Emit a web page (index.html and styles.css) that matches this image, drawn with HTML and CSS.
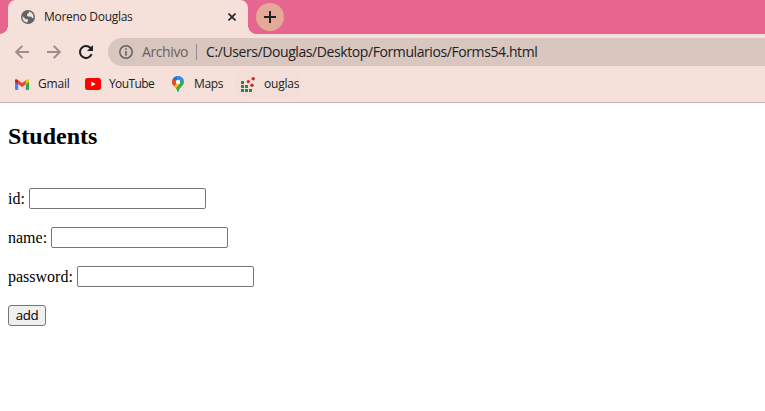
FILE: index.html
```html
<!DOCTYPE html>
<html lang="es">
<head>
<meta charset="utf-8">
<title>Moreno Douglas</title>
<link rel="stylesheet" href="styles.css">
</head>
<body>
<div class="tabstrip">
  <div class="tab">
    <svg class="globe" viewBox="0 0 14 14"><circle cx="7" cy="7" r="7" fill="#5f6368"/><path d="M7.800 1.400 7.900 3 6 4.200v1.500l1.900 1.100 2.100-.2 1.200 1.500 1.200.1C13 5.300 11.500 2.100 7.800 1.400ZM1.500 6.200l3.300 3 2.200.1v1.500l-1 1.700C3.200 12.100 1 9.500 1.500 6.200Z" fill="#f5e1da"/></svg>
    <span class="tab-title">Moreno Douglas</span>
    <svg class="close" viewBox="0 0 8 8"><path d="M.5.5 7.500 7.500M7.500.5.5 7.500" stroke="#202124" stroke-width="1.600"/></svg>
  </div>
  <div class="new-tab"><svg viewBox="0 0 12 12" width="12" height="12"><path d="M6 0v12M0 6h12" stroke="#202124" stroke-width="2"/></svg></div>
</div>
<div class="toolbar">
  <svg class="nav" viewBox="0 0 14 14"><path d="M14 7H1.500M7.300.9 1.200 7l6.100 6.100" fill="none" stroke="#9b8e8c" stroke-width="2"/></svg>
  <svg class="nav" viewBox="0 0 14 14"><path d="M0 7h12.500M6.700.9 12.800 7l-6.100 6.100" fill="none" stroke="#9b8e8c" stroke-width="2"/></svg>
  <svg class="nav reload" viewBox="0 0 14 14"><path d="M12.600 9.200A6 6 0 1 1 11.300 2.800l1 1" fill="none" stroke="#202124" stroke-width="2"/><path d="M14 0v6H8Z" fill="#202124"/></svg>
  <div class="omnibox">
    <svg class="info" viewBox="0 0 14 14"><circle cx="7" cy="7" r="6.200" fill="none" stroke="#5f6368" stroke-width="1.500"/><path d="M7 3.200v1.600M7 6v4.700" stroke="#5f6368" stroke-width="1.600"/></svg>
    <span class="scheme">Archivo</span><span class="divider"></span><span class="url">C:/Users/Douglas/Desktop/Formularios/Forms54.html</span>
  </div>
</div>
<div class="bookmarks">
  <div class="bookmark gmail">
    <svg viewBox="0 0 14 11" width="14" height="11"><path d="M0 2h3.200v9H1a1 1 0 0 1-1-1Z" fill="#4285f4"/><path d="M10.800 2H14v8a1 1 0 0 1-1 1h-2.200Z" fill="#34a853"/><path d="M3.200 1.200 7 4.100l3.800-2.900v4L7 8 3.200 5.200Z" fill="#ea4335"/><path d="M0 1.600C0 .1 1.700-.3 3.200 1.200v4L0 2.900Z" fill="#c5221f"/><path d="M14 1.600c0-1.500-1.700-1.900-3.200-.4v4L14 2.900Z" fill="#fbbc04"/></svg>
    <span>Gmail</span>
  </div>
  <div class="bookmark youtube">
    <svg viewBox="0 0 16 12" width="16" height="12"><rect width="16" height="12" rx="2.500" fill="#f00"/><path d="m6.300 3.500 4.400 2.500-4.400 2.500Z" fill="#fff"/></svg>
    <span>YouTube</span>
  </div>
  <div class="bookmark maps">
    <svg viewBox="0 0 12 16" width="12" height="16"><clipPath id="pin"><path d="M6 0a6 6 0 0 0-6 6c0 3.600 4.400 5 5.300 9.200q.7 1.400 1.400 0C7.600 11 12 9.600 12 6a6 6 0 0 0-6-6Z"/></clipPath><g clip-path="url(#pin)"><path d="M0 0h12v16H0Z" fill="#34a853"/><path d="m0 11 6-5 1.500 2L3 13.500Z" fill="#fbbc04"/><path d="M0 2.500 6 6 0 12Z" fill="#ea4335"/><path d="M0 0h5l1 6-5.200-3.500Z" fill="#1a73e8"/><path d="M4.500 0H12v4L6 6Z" fill="#4285f4"/></g><circle cx="6" cy="6" r="2.200" fill="#fff"/></svg>
    <span>Maps</span>
  </div>
  <div class="bookmark ouglas">
    <svg viewBox="0 0 14 15" width="14" height="15"><path d="M0 4h3v3H0ZM0 8h3v3H0ZM4 8h3v3H4ZM0 12h3v3H0ZM4 12h3v3H4ZM8 12h3v3H8Z" fill="#21864f"/><g fill="#c72d29"><circle cx="12.200" cy="1.800" r="1.700"/><circle cx="7.300" cy="4.600" r="1.700"/><circle cx="11" cy="8.200" r="1.700"/></g></svg>
    <span>ouglas</span>
  </div>
</div>
<main class="page">
  <h2>Students</h2>
  <form>
    <div class="field"><label for="id">id:</label><input id="id" type="text"></div>
    <div class="field"><label for="name">name:</label><input id="name" type="text"></div>
    <div class="field"><label for="password">password:</label><input id="password" type="password"></div>
    <button type="button">add</button>
  </form>
</main>
</body>
</html>
```
FILE: styles.css
```css
* { box-sizing: border-box; }
body { margin: 0; height: 411px; overflow: hidden; background: #fff; font-family: "Open Sans", sans-serif; font-size: 12px; color: #202124; }
svg { display: block; flex: none; }
span, label { white-space: nowrap; }
.tabstrip { height: 34px; display: flex; background: #e66690; }
.tab { width: 240px; height: 34px; margin-left: 8px; padding-left: 13px; display: flex; align-items: center; position: relative; background: #f5e1da; border-radius: 8px 8px 0 0; }
.tab::before, .tab::after { content: ""; position: absolute; bottom: 0; width: 8px; height: 8px; }
.tab::before { left: -8px; background: radial-gradient(circle at 0 0, #e66690 7.5px, #f5e1da 8px); }
.tab::after { right: -8px; background: radial-gradient(circle at 100% 0, #e66690 7.5px, #f5e1da 8px); }
.globe { width: 14px; height: 14px; }
.tab-title { margin-left: 9px; width: 180px; line-height: 16px; padding-bottom: 1px; letter-spacing: -.29px; }
.close { width: 8px; height: 8px; margin-left: 4px; }
.new-tab { width: 28px; height: 28px; margin: 3px 0 0 8px; border-radius: 50%; background: #e2aa97; display: flex; align-items: center; justify-content: center; }
.toolbar { height: 36px; padding: 4px 0 4px 15px; display: flex; align-items: center; background: #f5e1da; }
.nav { width: 14px; height: 14px; margin-right: 18px; }
.reload { margin-right: 15px; }
.omnibox { flex: 1; height: 28px; padding-left: 11px; display: flex; align-items: center; border-radius: 14px 0 0 14px; background: #d8c6bf; font-size: 14px; }
.info { width: 14px; height: 14px; }
.scheme { width: 55px; margin-left: 9px; padding-bottom: 1px; color: #69615f; letter-spacing: -.4px; }
.divider { width: 1px; height: 16px; background: #988b87; margin-right: 9px; margin-left: -1px; }
.url { padding-bottom: 1px; letter-spacing: -.41px; }
.bookmarks { height: 33px; padding: 0 0 4px 8px; display: flex; align-items: center; background: #f5e1da; border-bottom: 1px solid #c5b5ae; }
.bookmark { height: 28px; padding-left: 7px; display: flex; align-items: center; letter-spacing: -.2px; }
.bookmark span { padding-bottom: 2px; }
.gmail { width: 70px; }
.gmail span { margin-left: 9px; }
.youtube { width: 87px; letter-spacing: -.6px; }
.youtube span { margin-left: 8px; }
.maps { width: 69px; letter-spacing: -.35px; }
.maps span { margin-left: 10px; }
.ouglas { width: 71px; border-radius: 14px; background: #f4dfd8; }
.ouglas span { margin-left: 9px; }
.page { padding: 20px 8px 0; font-family: "Liberation Serif", serif; font-size: 16px; color: #000; }
h2 { margin: 0 0 38px; font-size: 24px; line-height: 27px; }
.field { height: 21px; margin-bottom: 18px; display: flex; align-items: center; }
label { margin-right: 4px; line-height: 19px; }
input { width: 177px; height: 21px; margin: 0; border: 1px solid #767676; border-radius: 2px; padding: 1px 2px; background: #fff; }
button { display: block; width: 38px; height: 21px; padding: 0; border: 1px solid #767676; border-radius: 3px; background: #efefef; font: 13.333px/19px "Open Sans", sans-serif; letter-spacing: -.4px; color: #000; }
```
